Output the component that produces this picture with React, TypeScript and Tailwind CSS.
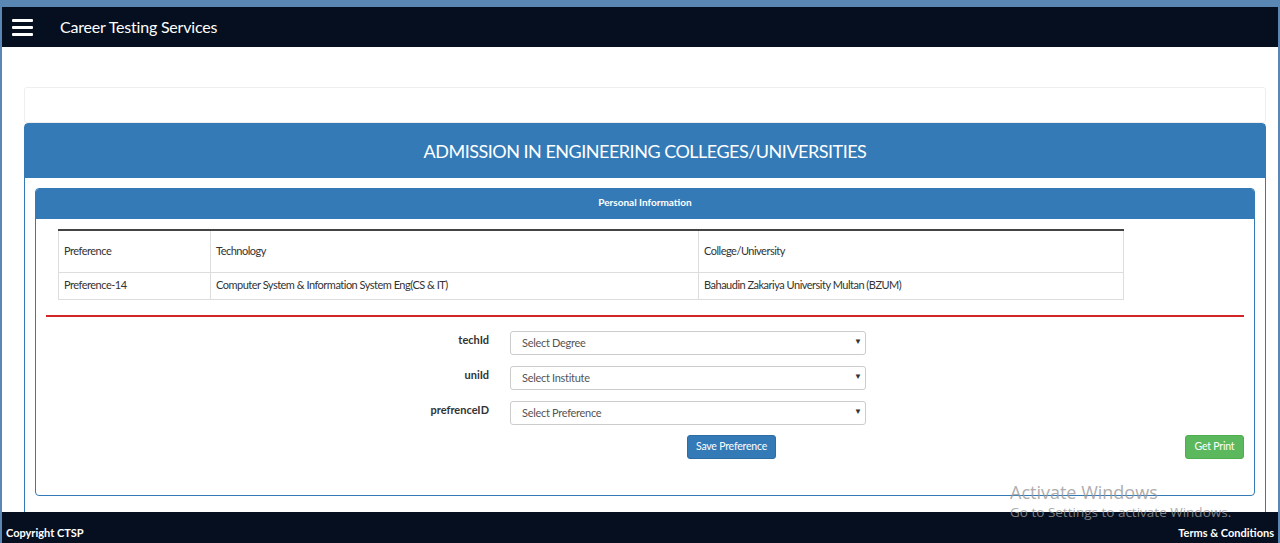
import React from 'react';

const rows = [
  {
    preference: 'Preference-14',
    technology: 'Computer System & Information System Eng(CS & IT)',
    college: 'Bahaudin Zakariya University Multan (BZUM)',
  },
];

const fields = [
  { label: 'techId', placeholder: 'Select Degree' },
  { label: 'uniId', placeholder: 'Select Institute' },
  { label: 'prefrenceID', placeholder: 'Select Preference' },
];

const SelectBox = ({ placeholder }: { placeholder: string }) => (
  <div className="relative w-[356px] h-[24px]">
    <select
      defaultValue=""
      className="appearance-none w-full h-full border border-[#cccccc] rounded-[3px] bg-white pl-[11px] text-[11px] tracking-[-0.3px] text-[#555555] outline-none"
    >
      <option value="">{placeholder}</option>
    </select>
    <span className="absolute right-[4px] top-1/2 -translate-y-1/2 text-[8px] text-[#333] pointer-events-none">▼</span>
  </div>
);

export default function App() {
  return (
    <div
      className="relative h-[543px] w-full overflow-hidden bg-white border-t-[7px] border-l-[2px] border-r-[2px] border-[#5a86b4] flex flex-col"
      style={{ fontFamily: 'Lato, "Open Sans", sans-serif' }}
    >
      {/* navbar */}
      <div className="h-[40px] shrink-0 bg-[#050f20] flex items-center">
        <div className="ml-[10px] w-[21px] flex flex-col gap-[4px]">
          <span className="block h-[3px] bg-white rounded-[1px]" />
          <span className="block h-[3px] bg-white rounded-[1px]" />
          <span className="block h-[3px] bg-white rounded-[1px]" />
        </div>
        <span className="ml-[27px] text-[16px] text-white tracking-[-0.2px]">Career Testing Services</span>
      </div>

      {/* content */}
      <div className="flex-1 overflow-hidden pt-[40px] pl-[22px] pr-[12px]">
        <div className="h-[36px] border border-[#eeeeee] rounded-[3px] bg-white" />

        <div className="border border-[#337ab7] rounded-t-[4px]">
          <div className="h-[54px] bg-[#337ab7] flex items-center justify-center">
            <h1 className="text-[18px] text-white tracking-[-0.5px]">ADMISSION IN ENGINEERING COLLEGES/UNIVERSITIES</h1>
          </div>

          <div className="px-[10px] pt-[10px] pb-[40px]">
            <div className="border border-[#337ab7] rounded-[4px]">
              <div className="h-[30px] bg-[#337ab7] rounded-t-[3px] flex items-center justify-center">
                <span className="text-[10px] font-bold text-white -mt-[3px]">Personal Information</span>
              </div>

              <div className="px-[10px] pt-[10px] pb-[36px]">
                <div className="pl-[12px]">
                  <table className="w-[1066px] border-collapse text-[11px] tracking-[-0.5px] text-[#333333]">
                    <thead>
                      <tr className="border-t-2 border-[#444444]">
                        <th className="w-[152px] h-[42px] text-left font-normal px-[5px] border-l border-r border-[#dddddd]">Preference</th>
                        <th className="w-[488px] text-left font-normal px-[5px] border-r border-[#dddddd]">Technology</th>
                        <th className="text-left font-normal px-[5px] border-r border-[#dddddd]">College/University</th>
                      </tr>
                    </thead>
                    <tbody>
                      {rows.map(r => (
                        <tr key={r.preference} className="border-t border-b border-[#dddddd]">
                          <td className="h-[27px] px-[5px] border-l border-r border-[#dddddd]">{r.preference}</td>
                          <td className="px-[5px] border-r border-[#dddddd]">{r.technology}</td>
                          <td className="px-[5px] border-r border-[#dddddd]">{r.college}</td>
                        </tr>
                      ))}
                    </tbody>
                  </table>
                </div>

                <div className="mt-[15px] h-[2px] bg-[#d22525]" />

                <div className="mt-[12px] flex flex-col gap-[11px]">
                  {fields.map(f => (
                    <div key={f.label} className="flex items-center">
                      <label className="w-[443px] text-right text-[11px] font-bold text-[#333333]">{f.label}</label>
                      <div className="ml-[21px]">
                        <SelectBox placeholder={f.placeholder} />
                      </div>
                    </div>
                  ))}
                </div>

                <div className="mt-[12px] flex items-center">
                  <button className="ml-[641px] w-[89px] h-[24px] rounded-[3px] bg-[#337ab7] border border-[#2e6da4] text-[10.5px] text-white tracking-[-0.2px]">
                    Save Preference
                  </button>
                  <button className="ml-auto w-[59px] h-[24px] rounded-[3px] bg-[#5cb85c] border border-[#4cae4c] text-[10.5px] text-white tracking-[-0.2px]">
                    Get Print
                  </button>
                </div>
              </div>
            </div>
          </div>
        </div>
      </div>

      {/* footer */}
      <div className="absolute left-[-2px] right-[-2px] bottom-0 h-[31px] bg-[#050f20] flex items-end justify-between px-[6px] pb-[2px]">
        <span className="text-[11px] font-bold text-white">Copyright CTSP</span>
        <span className="text-[11px] font-bold text-white">Terms &amp; Conditions</span>
      </div>

      {/* OS watermark */}
      <div
        className="absolute left-[1008px] top-[474px] pointer-events-none text-[#9a9a9a] opacity-80 leading-tight"
        style={{ fontFamily: '"Open Sans", "Noto Sans", sans-serif' }}
      >
        <div className="text-[18px]">Activate Windows</div>
        <div className="text-[13.5px]">Go to Settings to activate Windows.</div>
      </div>
    </div>
  );
}
